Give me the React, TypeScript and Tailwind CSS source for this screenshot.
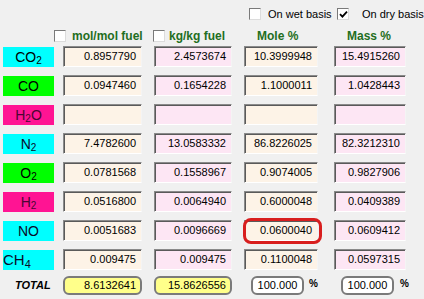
import React from "react";

type Row = {
  label: React.ReactNode;
  bg: string;
  text: string;
  left?: boolean;
  vals: [string, string, string, string];
};

const rows: Row[] = [
  { label: <>CO<sub className="text-[10px]">2</sub></>, bg: "bg-[#00ffff]", text: "text-black", vals: ["0.8957790", "2.4573674", "10.3999948", "15.4915260"] },
  { label: <>CO</>, bg: "bg-[#00ff00]", text: "text-black", vals: ["0.0947460", "0.1654228", "1.1000011", "1.0428443"] },
  { label: <>H<sub className="text-[10px]">2</sub>O</>, bg: "bg-[#ff1493]", text: "text-[#4a0632]", vals: ["", "", "", ""] },
  { label: <>N<sub className="text-[10px]">2</sub></>, bg: "bg-[#00ffff]", text: "text-[#0a0a2a]", vals: ["7.4782600", "13.0583332", "86.8226025", "82.3212310"] },
  { label: <>O<sub className="text-[10px]">2</sub></>, bg: "bg-[#00ff00]", text: "text-black", vals: ["0.0781568", "0.1558967", "0.9074005", "0.9827906"] },
  { label: <>H<sub className="text-[10px]">2</sub></>, bg: "bg-[#ff1493]", text: "text-[#4a0632]", vals: ["0.0516800", "0.0064940", "0.6000048", "0.0409389"] },
  { label: <>NO</>, bg: "bg-[#00ffff]", text: "text-[#0a0a2a]", vals: ["0.0051683", "0.0096669", "0.0600040", "0.0609412"] },
  { label: <>CH<sub className="text-[11px]">4</sub></>, bg: "bg-[#00ffff]", text: "text-[#0a0a2a]", left: true, vals: ["0.009475", "0.009475", "0.1100048", "0.0597315"] },
];

function Check({ checked }: { checked?: boolean }) {
  return (
    <span className="flex h-[12px] w-[12px] shrink-0 items-center justify-center border border-t-[#7a7a7a] border-l-[#7a7a7a] border-r-[#dcdcdc] border-b-[#dcdcdc] bg-white">
      {checked && (
        <svg width="9" height="9" viewBox="0 0 9 9">
          <path d="M1 4.2 L3.4 6.6 L8 1.6" stroke="#000" strokeWidth="1.8" fill="none" />
        </svg>
      )}
    </span>
  );
}

function Cell({ value, w, ml, tone, ring }: { value: string; w: string; ml: string; tone: string; ring?: boolean }) {
  return (
    <div className={`relative ${ml}`}>
      <div
        className={`flex h-[21px] ${w} items-center justify-end border border-t-[#8a8a8a] border-l-[#8a8a8a] border-r-[#f4f4f4] border-b-white pr-[5px] text-[11px] text-black shadow-[inset_1px_1px_0_#5a5a5a] ${tone}`}
      >
        {value}
      </div>
      {ring && (
        <div className="absolute -left-[1px] -top-[2px] h-[26px] w-[79px] rounded-[8px] border-[3px] border-[#d81e1e]" />
      )}
    </div>
  );
}

export default function App() {
  return (
    <div
      className="relative h-[299px] w-[424px] overflow-hidden bg-[#f0f0f0]"
      style={{ fontFamily: '"Liberation Sans", Arial, sans-serif' }}
    >
      {/* basis toggles */}
      <div className="mt-[8px] flex h-[12px] items-center whitespace-nowrap pl-[249px] text-[11px] text-black">
        <Check />
        <span className="ml-[7px] w-[69px]">On wet basis</span>
        <Check checked />
        <span className="ml-[13px]">On dry basis</span>
      </div>

      {/* column headers */}
      <div className="mt-[10px] flex h-[12px] items-center whitespace-nowrap pl-[54px] text-[12px] font-bold text-[#1f6e22]">
        <Check />
        <span className="ml-[6px] w-[81px]">mol/mol fuel</span>
        <Check />
        <span className="ml-[4px] w-[88px]">kg/kg fuel</span>
        <span className="w-[90px]">Mole %</span>
        <span>Mass %</span>
      </div>

      {/* species rows */}
      <div className="mt-[4px] flex flex-col gap-[8px]">
        {rows.map((r, i) => (
          <div key={i} className="flex h-[21px] items-center">
            <div
              className={`ml-[3px] flex h-[20px] w-[51px] items-center ${r.left ? "justify-start text-[15px]" : "justify-center text-[14px]"} ${r.bg} ${r.text}`}
            >
              <span className="leading-none">{r.label}</span>
            </div>
            <Cell value={r.vals[0]} w="w-[79px]" ml="ml-[9px]" tone="bg-[#fdf3e7]" />
            <Cell value={r.vals[1]} w="w-[78px]" ml="ml-[12px]" tone="bg-[#fde6f4]" />
            <Cell value={r.vals[2]} w="w-[74px]" ml="ml-[12px]" tone="bg-[#fdf3e7]" ring={i === 6} />
            <Cell value={r.vals[3]} w="w-[72px]" ml="ml-[16px]" tone="bg-[#fde6f4]" />
          </div>
        ))}
      </div>

      {/* totals */}
      <div className="mt-[6px] flex h-[19px] items-center text-[11px] text-black">
        <span className="ml-[15px] w-[48px] text-[11px] font-bold italic">TOTAL</span>
        <div className="flex h-[19px] w-[79px] items-center justify-end rounded-[6px] border-2 border-[#7a7a7a] bg-[#ffff8a] pr-[4px]">
          8.6132641
        </div>
        <div className="ml-[12px] flex h-[19px] w-[78px] items-center justify-end rounded-[6px] border-2 border-[#7a7a7a] bg-[#ffff8a] pr-[4px]">
          15.8626556
        </div>
        <div className="ml-[19px] flex h-[19px] w-[53px] items-center justify-center rounded-[6px] border-2 border-[#7a7a7a] bg-white">
          100.000
        </div>
        <span className="-mt-[4px] ml-[5px] text-[10px] font-bold">%</span>
        <div className="ml-[23px] flex h-[19px] w-[53px] items-center justify-center rounded-[6px] border-2 border-[#7a7a7a] bg-white">
          100.000
        </div>
        <span className="-mt-[4px] ml-[6px] text-[10px] font-bold">%</span>
      </div>
    </div>
  );
}
